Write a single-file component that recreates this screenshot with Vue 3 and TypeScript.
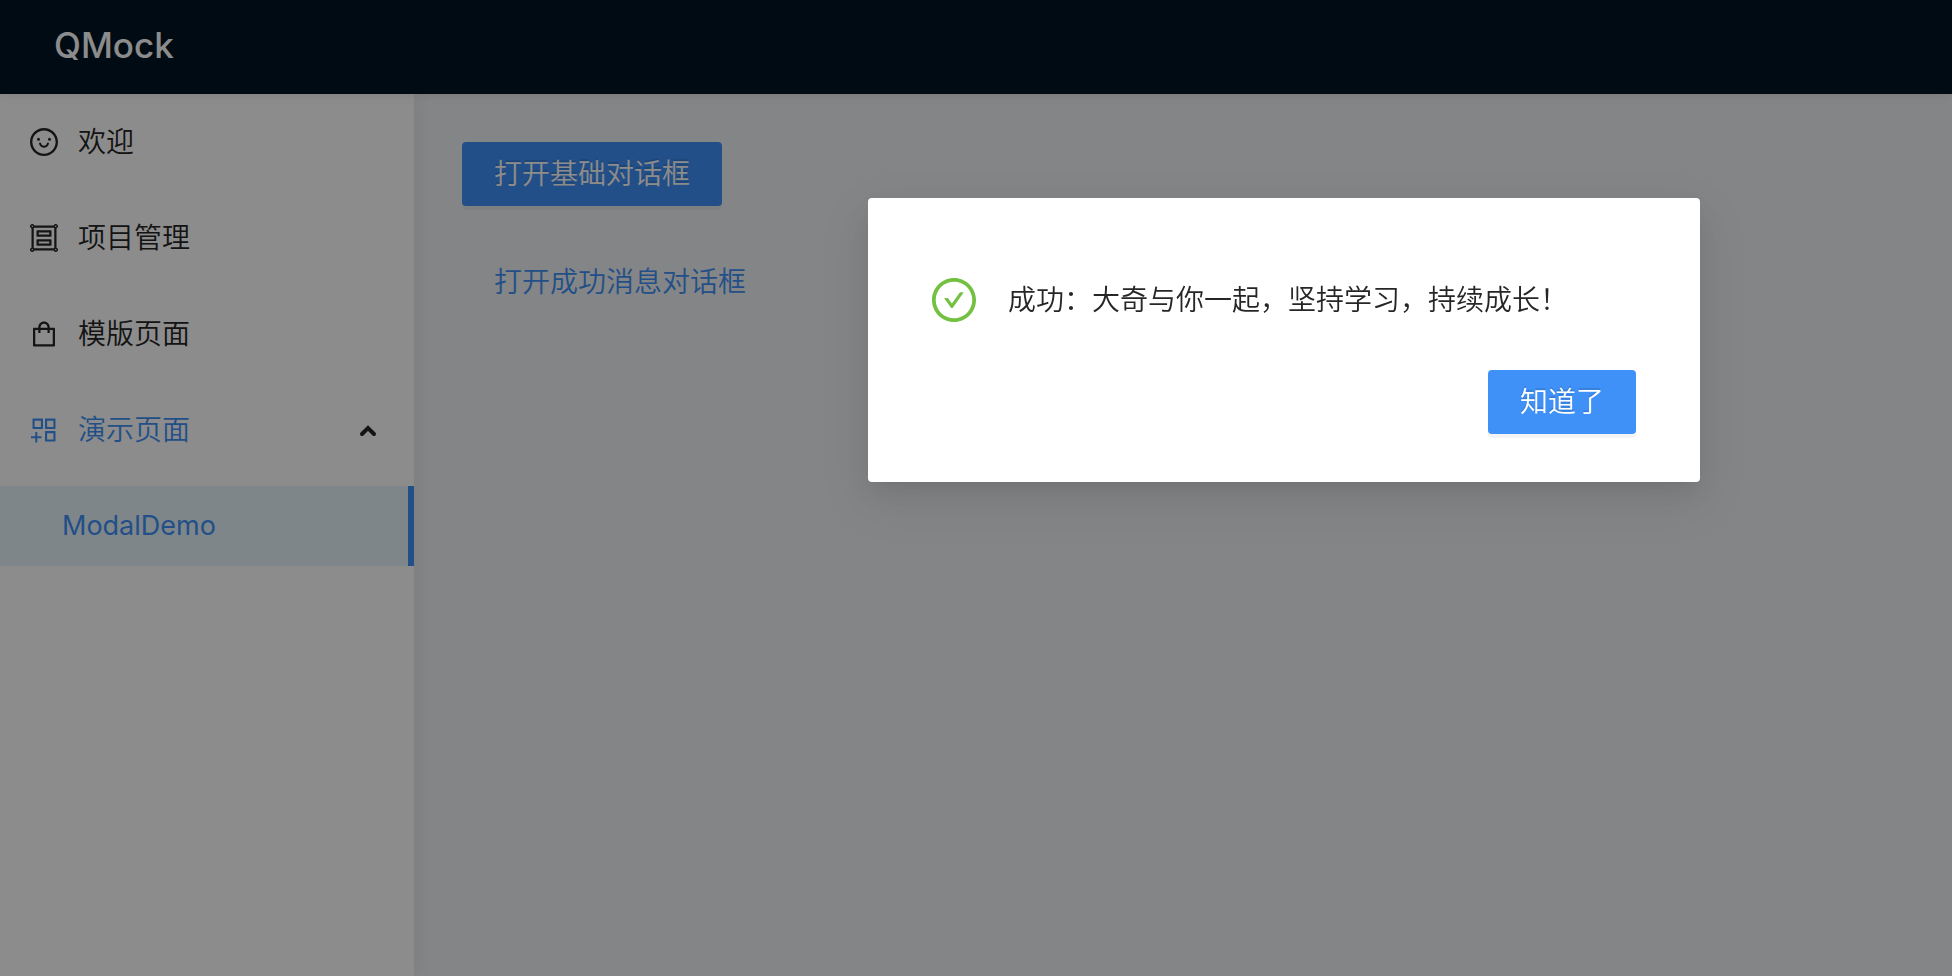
<script setup lang="ts">
import { ref } from 'vue'

interface MenuEntry {
  key: string
  label: string
  icon: string
}

const ring =
  'M512 64C264.6 64 64 264.6 64 512s200.6 448 448 448 448-200.6 448-448S759.4 64 512 64zm0 820c-205.4 0-372-166.6-372-372s166.6-372 372-372 372 166.6 372 372-166.6 372-372 372z'

const entries: MenuEntry[] = [
  {
    key: 'welcome',
    label: '欢迎',
    icon:
      ring +
      'M288 421a48 48 0 1096 0 48 48 0 10-96 0zm352 0a48 48 0 1096 0 48 48 0 10-96 0zM664 533h-48.1c-4.2 0-7.8 3.2-8.1 7.4C604 589.9 562.5 629 512 629s-92.1-39.1-95.8-88.6c-.3-4.2-3.9-7.4-8.1-7.4H360a8 8 0 00-8 8.4c4.4 84.3 74.5 151.6 160 151.6s155.6-67.3 160-151.6a8 8 0 00-8-8.4z',
  },
  {
    key: 'project',
    label: '项目管理',
    icon:
      'M912 820.1V203.9c28-9.9 48-36.6 48-67.9 0-39.8-32.2-72-72-72-31.3 0-58 20-67.9 48H203.9C194 84 167.3 64 136 64c-39.8 0-72 32.2-72 72 0 31.3 20 58 48 67.9v616.2C84 830 64 856.7 64 888c0 39.8 32.2 72 72 72 31.3 0 58-20 67.9-48h616.2c9.9 28 36.6 48 67.9 48 39.8 0 72-32.2 72-72 0-31.3-20-58-48-67.9zM888 112c13.2 0 24 10.8 24 24s-10.8 24-24 24-24-10.8-24-24 10.8-24 24-24zM136 912c-13.2 0-24-10.8-24-24s10.8-24 24-24 24 10.8 24 24-10.8 24-24 24zm0-752c-13.2 0-24-10.8-24-24s10.8-24 24-24 24 10.8 24 24-10.8 24-24 24zm704 680H184V184h656v656zm48 72c-13.2 0-24-10.8-24-24s10.8-24 24-24 24 10.8 24 24-10.8 24-24 24zM288 474h448c8.8 0 16-7.2 16-16V282c0-8.8-7.2-16-16-16H288c-8.8 0-16 7.2-16 16v176c0 8.8 7.2 16 16 16zm56-136h336v64H344v-64zm-56 420h448c8.8 0 16-7.2 16-16V566c0-8.8-7.2-16-16-16H288c-8.8 0-16 7.2-16 16v176c0 8.8 7.2 16 16 16zm56-136h336v64H344v-64z',
  },
  {
    key: 'template',
    label: '模版页面',
    icon:
      'M832 312H696v-16c0-101.6-82.4-184-184-184s-184 82.4-184 184v16H192c-17.7 0-32 14.3-32 32v536c0 17.7 14.3 32 32 32h640c17.7 0 32-14.3 32-32V344c0-17.7-14.3-32-32-32zm-432-16c0-61.9 50.1-112 112-112s112 50.1 112 112v16H400v-16zm392 544H232V384h96v88c0 4.4 3.6 8 8 8h56c4.4 0 8-3.6 8-8v-88h224v88c0 4.4 3.6 8 8 8h56c4.4 0 8-3.6 8-8v-88h96v456z',
  },
]

const demoIcon =
  'M464 144H160c-8.8 0-16 7.2-16 16v304c0 8.8 7.2 16 16 16h304c8.8 0 16-7.2 16-16V160c0-8.8-7.2-16-16-16zm-52 268H212V212h200v200zm452-268H560c-8.8 0-16 7.2-16 16v304c0 8.8 7.2 16 16 16h304c8.8 0 16-7.2 16-16V160c0-8.8-7.2-16-16-16zm-52 268H612V212h200v200zm52 132H560c-8.8 0-16 7.2-16 16v304c0 8.8 7.2 16 16 16h304c8.8 0 16-7.2 16-16V560c0-8.8-7.2-16-16-16zm-52 268H612V612h200v200zM424 712H296V584c0-4.4-3.6-8-8-8h-48c-4.4 0-8 3.6-8 8v128H104c-4.4 0-8 3.6-8 8v48c0 4.4 3.6 8 8 8h128v128c0 4.4 3.6 8 8 8h48c4.4 0 8-3.6 8-8V776h128c4.4 0 8-3.6 8-8v-48c0-4.4-3.6-8-8-8z'

const successIcon =
  ring +
  'M699 353h-46.9c-10.2 0-19.9 4.9-25.9 13.3L469 584.3l-71.2-98.8c-6-8.3-15.6-13.3-25.9-13.3H325c-6.5 0-10.3 7.4-6.5 12.7l124.6 172.8a31.8 31.8 0 0051.7 0l210.6-292c3.9-5.3.1-12.7-6.4-12.7z'

const expanded = ref(true)
const dialogOpen = ref(true)
const dialogText = ref('成功：大奇与你一起，坚持学习，持续成长！')

function openDialog(text: string) {
  dialogText.value = text
  dialogOpen.value = true
}
</script>

<template>
  <div class="layout">
    <header class="header">
      <h1 class="brand">QMock</h1>
    </header>

    <div class="body">
      <aside class="sider">
        <nav class="menu">
          <a v-for="entry in entries" :key="entry.key" class="item" :href="'#' + entry.key">
            <svg class="icon" viewBox="64 64 896 896" aria-hidden="true">
              <path :d="entry.icon" fill-rule="evenodd" />
            </svg>
            <span>{{ entry.label }}</span>
          </a>
          <button class="item parent" type="button" :aria-expanded="expanded" @click="expanded = !expanded">
            <svg class="icon" viewBox="64 64 896 896" aria-hidden="true">
              <path :d="demoIcon" />
            </svg>
            <span>演示页面</span>
            <svg class="arrow" :class="{ closed: !expanded }" viewBox="0 0 20 20" aria-hidden="true">
              <path d="M4 14L10 8L16 14" />
            </svg>
          </button>
          <a v-if="expanded" class="item child" href="#modal-demo" aria-current="page">ModalDemo</a>
        </nav>
      </aside>

      <main class="content">
        <button class="btn primary" type="button" @click="openDialog('基础对话框')">打开基础对话框</button>
        <button
          class="btn link"
          type="button"
          @click="openDialog('成功：大奇与你一起，坚持学习，持续成长！')"
        >
          打开成功消息对话框
        </button>
      </main>
    </div>

    <div v-if="dialogOpen" class="mask">
      <section class="dialog" role="dialog" aria-modal="true" aria-labelledby="dialog-message">
        <div class="message">
          <svg class="success" viewBox="64 64 896 896" aria-hidden="true">
            <path :d="successIcon" fill-rule="evenodd" />
          </svg>
          <span id="dialog-message">{{ dialogText }}</span>
        </div>
        <div class="actions">
          <button class="btn primary" type="button" @click="dialogOpen = false">知道了</button>
        </div>
      </section>
    </div>
  </div>
</template>

<style>
body {
  margin: 0;
}
</style>

<style scoped>
.layout {
  display: flex;
  flex-direction: column;
  min-height: 100vh;
  background: #f0f2f5;
  color: #262626;
  font-family: Inter, 'Noto Sans CJK SC', sans-serif;
  font-size: 28px;
  font-weight: 350;
  line-height: 44px;
}

.header {
  position: relative;
  z-index: 2;
  display: flex;
  align-items: center;
  height: 94px;
  padding: 0 54px 4px;
  box-sizing: border-box;
  background: #001423;
  box-shadow: 0 2px 8px rgba(0, 21, 41, 0.08);
}

.brand {
  margin: 0;
  color: #fff;
  font-size: 35px;
  font-weight: 500;
}

.body {
  display: flex;
  flex: 1;
}

.sider {
  position: relative;
  z-index: 1;
  flex: 0 0 414px;
  background: #fff;
  box-shadow: 4px 0 16px rgba(29, 35, 41, 0.05);
}

.menu {
  display: flex;
  flex-direction: column;
  gap: 16px;
  padding: 8px 0;
}

.item {
  display: flex;
  align-items: center;
  gap: 20px;
  height: 80px;
  padding: 0 30px;
  box-sizing: border-box;
  border: 0;
  background: none;
  color: #262626;
  font: inherit;
  text-decoration: none;
  cursor: pointer;
}

.icon {
  width: 28px;
  height: 28px;
  fill: currentColor;
}

.parent,
.child {
  color: #4091f7;
}

.child {
  padding-left: 62px;
  border-right: 6px solid #4091f7;
  background: #e5f5fb;
  font-size: 27px;
  font-weight: 400;
}

.arrow {
  width: 20px;
  height: 20px;
  margin-left: auto;
  margin-right: 6px;
  fill: none;
  stroke: #262626;
  stroke-width: 4;
  stroke-linecap: round;
}

.arrow.closed {
  transform: rotate(180deg);
}

.content {
  display: flex;
  flex: 1;
  flex-direction: column;
  align-items: flex-start;
  gap: 44px;
  padding: 48px;
}

.btn {
  height: 64px;
  padding: 0 32px;
  border: 0;
  border-radius: 4px;
  font: inherit;
  cursor: pointer;
}

.primary {
  background: #4091f7;
  color: #fff;
  box-shadow: 0 4px 0 rgba(0, 0, 0, 0.045);
  text-shadow: 0 -2px 0 rgba(0, 0, 0, 0.12);
}

.link {
  background: none;
  color: #4091f7;
}

.mask {
  position: fixed;
  inset: 0;
  z-index: 10;
  display: flex;
  align-items: flex-start;
  justify-content: flex-end;
  padding: 198px 252px 48px;
  background: rgba(0, 0, 0, 0.45);
}

.dialog {
  width: 832px;
  padding: 80px 64px 48px;
  box-sizing: border-box;
  border-radius: 4px;
  background: #fff;
  box-shadow:
    0 6px 12px -8px rgba(0, 0, 0, 0.12),
    0 12px 32px rgba(0, 0, 0, 0.08),
    0 18px 56px 16px rgba(0, 0, 0, 0.05);
}

.message {
  display: flex;
  align-items: center;
  gap: 32px;
}

.success {
  flex: none;
  width: 44px;
  height: 44px;
  fill: #73c042;
}

.actions {
  display: flex;
  justify-content: flex-end;
  margin-top: 48px;
}
</style>
